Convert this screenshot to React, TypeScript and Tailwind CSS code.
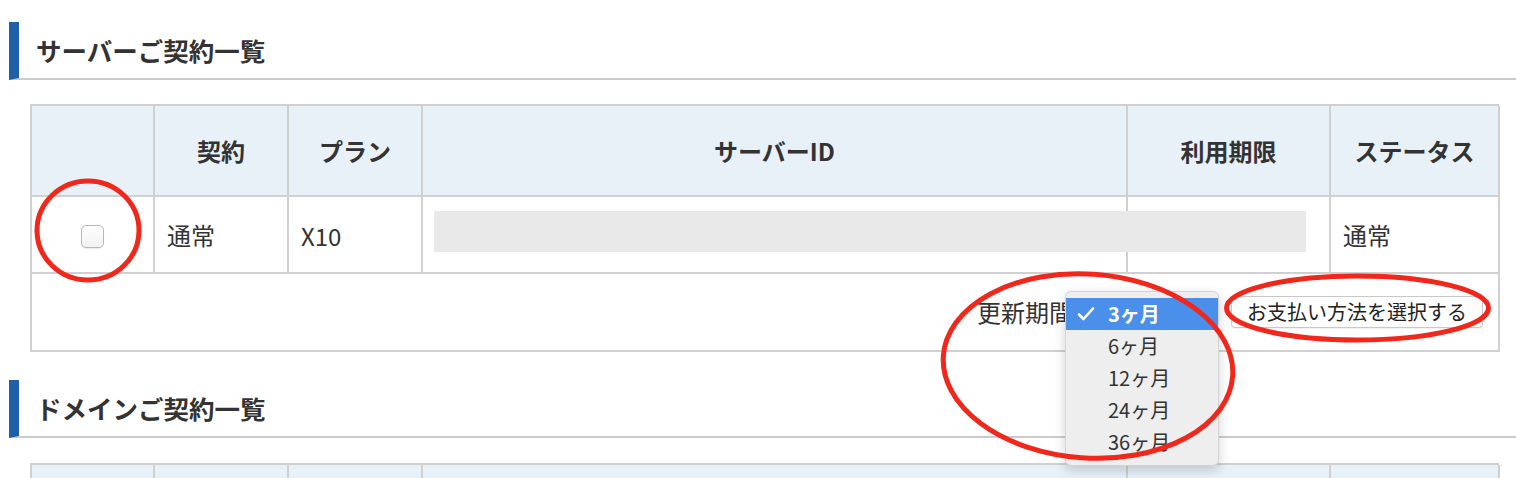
import React from "react";

const cols = "grid grid-cols-[123px_134px_134px_705px_203px_169px]";

function Heading({ children }: { children: React.ReactNode }) {
  return (
    <div className="ml-[9px] h-[58px] border-l-[10px] border-l-[#1f5ea8] border-b-2 border-b-[#cccccc] pl-[17px] flex items-center">
      <h2 className="text-[25.5px] font-bold text-[#333333] leading-none">{children}</h2>
    </div>
  );
}

const headCell =
  "h-[91px] border-r-2 border-b-2 border-[#d0d0d0] bg-[#e8f0f8] flex items-center justify-center text-[24px] font-bold text-[#333333]";
const bodyCell =
  "h-[77px] border-r-2 border-b-2 border-[#d0d0d0] bg-white flex items-center pl-[12px] text-[24px] text-[#333333]";

function Check() {
  return (
    <svg width="18" height="16" viewBox="0 0 18 16" className="absolute left-[11px] top-[8px]">
      <polyline points="2,8.5 6.5,13 16,2.5" fill="none" stroke="white" strokeWidth="2.6" strokeLinecap="round" strokeLinejoin="round" />
    </svg>
  );
}

export default function App() {
  const items = ["6ヶ月", "12ヶ月", "24ヶ月", "36ヶ月"];
  return (
    <div
      className="relative w-full h-[478px] overflow-hidden bg-white pt-[22px]"
      style={{ fontFamily: '"Noto Sans CJK JP", "Noto Sans", sans-serif' }}
    >
      <Heading>サーバーご契約一覧</Heading>

      <div className="ml-[30px] mt-[24px] w-[1469px] border-l-2 border-t-2 border-[#d0d0d0]">
        <div className={cols}>
          <div className={headCell}></div>
          <div className={headCell}>契約</div>
          <div className={headCell}>プラン</div>
          <div className={headCell}>サーバーID</div>
          <div className={headCell}>利用期限</div>
          <div className={headCell}>ステータス</div>

          <div className={bodyCell + " justify-center !pl-0 pt-[4px]"}>
            <div className="w-[23px] h-[23px] rounded-[5px] border border-[#b8b8b8] bg-gradient-to-b from-white to-[#f2f2f2] shadow-[0_1px_1px_rgba(0,0,0,0.08)]" />
          </div>
          <div className={bodyCell}>通常</div>
          <div className={bodyCell + " pt-[2px]"}>X10</div>
          <div className={bodyCell + " relative"}>
            <div className="absolute left-[11px] top-[14px] w-[872px] h-[41px] bg-[#e9e9e9] z-10" />
          </div>
          <div className={bodyCell}></div>
          <div className={bodyCell}>通常</div>

          <div className="col-span-6 h-[78px] border-r-2 border-b-2 border-[#d0d0d0] flex items-center justify-end pr-[15px]">
            <span className="text-[24px] text-[#333333] leading-none">更新期間</span>
            <div className="relative w-[154px] h-[32px] -ml-[8px] z-20">
              <div className="absolute left-0 top-[-5px] w-[154px] h-[175px] rounded-[6px] bg-[#eeeeee] border border-[#d4d4d4] shadow-[0_4px_12px_rgba(0,0,0,0.18)] pt-[6px] overflow-hidden">
                <div className="relative h-[32px] bg-[#4a8fe9] text-white flex items-center pl-[42px] text-[20px] font-semibold">
                  <Check />
                  3ヶ月
                </div>
                {items.map((t) => (
                  <div key={t} className="h-[32px] flex items-center pl-[42px] text-[20px] text-[#333333]">
                    {t}
                  </div>
                ))}
              </div>
            </div>
            <button className="ml-[12px] w-[252px] h-[32px] rounded-[4px] border border-[#c8c8c8] bg-white text-[20px] text-[#222222] flex items-center justify-center shadow-[0_1px_1px_rgba(0,0,0,0.06)]">
              お支払い方法を選択する
            </button>
          </div>
        </div>
      </div>

      <div className="mt-[28px]">
        <Heading>ドメインご契約一覧</Heading>
      </div>

      <div className="ml-[30px] mt-[25px] w-[1469px] border-l-2 border-t-2 border-[#d0d0d0]">
        <div className={cols}>
          <div className={headCell}></div>
          <div className={headCell}></div>
          <div className={headCell}></div>
          <div className={headCell}></div>
          <div className={headCell}></div>
          <div className={headCell}></div>
        </div>
      </div>

      <svg
        className="absolute left-0 top-0 pointer-events-none z-30"
        width="1516"
        height="478"
        viewBox="0 0 1516 478"
      >
        <ellipse cx="88" cy="230.5" rx="51" ry="49.5" fill="none" stroke="#f2271b" strokeWidth="5" />
        <ellipse cx="1088" cy="366" rx="145" ry="92" fill="none" stroke="#f2271b" strokeWidth="5" transform="rotate(4 1088 366)" />
        <ellipse cx="1357.5" cy="308" rx="131" ry="32" fill="none" stroke="#f2271b" strokeWidth="5" />
      </svg>
    </div>
  );
}
